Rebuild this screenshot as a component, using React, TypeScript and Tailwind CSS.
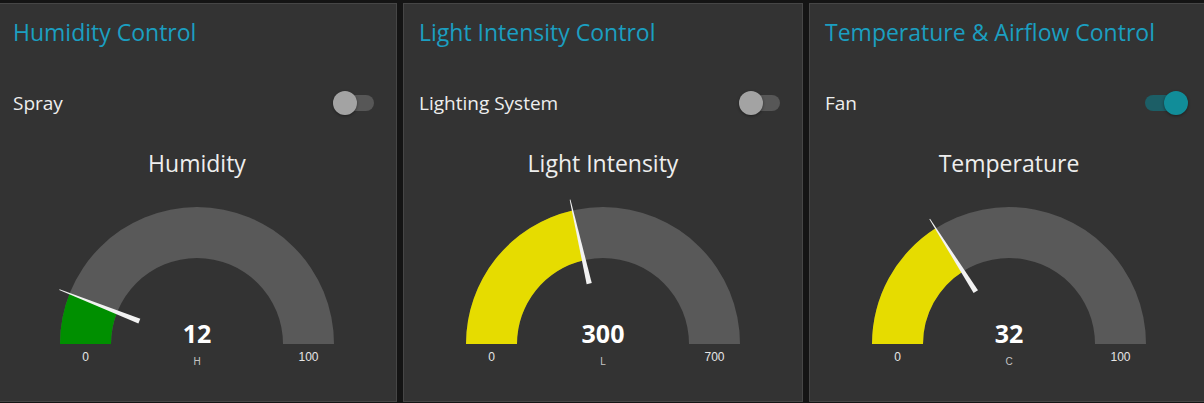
import React from 'react'

type GaugeProps = {
    value: number
    min: number
    max: number
    unit: string
    color: string
}

function Gauge({ value, min, max, unit, color }: GaugeProps) {
    const cx = 150
    const cy = 150
    const R = 137
    const r = 86
    const t = (value - min) / (max - min)
    const a = Math.PI * (1 - t)
    const pt = (rad: number, ang: number) => [cx + rad * Math.cos(ang), cy - rad * Math.sin(ang)]
    const sector = (ang: number) => {
        const [x1, y1] = pt(R, ang)
        const [x2, y2] = pt(r, ang)
        return `M ${cx - R} ${cy} A ${R} ${R} 0 0 1 ${x1} ${y1} L ${x2} ${y2} A ${r} ${r} 0 0 0 ${cx - r} ${cy} Z`
    }
    // needle: wide base inside the arc, thin tip just past the outer edge
    const [bx, by] = pt(62, a)
    const [tx, ty] = pt(148, a)
    const nx = Math.sin(a)
    const ny = Math.cos(a)
    const needle = [
        [bx + 2.6 * nx, by + 2.6 * ny],
        [tx + 0.4 * nx, ty + 0.4 * ny],
        [tx - 0.4 * nx, ty - 0.4 * ny],
        [bx - 2.6 * nx, by - 2.6 * ny],
    ]
        .map(([x, y]) => `${x},${y}`)
        .join(' ')

    return (
        <svg width="300" height="180" viewBox="0 0 300 180">
            <path d={sector(0)} fill="#595959" />
            <path d={sector(a)} fill={color} />
            <polygon points={needle} fill="#f2f2f2" />
            <text
                x={cx}
                y={149}
                textAnchor="middle"
                fill="#ffffff"
                fontSize="25"
                fontWeight="700"
                fontFamily="'Open Sans', sans-serif"
            >
                {value}
            </text>
            <text x={cx - (R + r) / 2} y={167} textAnchor="middle" fill="#e6e6e6" fontSize="12" fontFamily="'Liberation Sans', Arial, sans-serif">
                {min}
            </text>
            <text x={cx + (R + r) / 2} y={167} textAnchor="middle" fill="#e6e6e6" fontSize="12" fontFamily="'Liberation Sans', Arial, sans-serif">
                {max}
            </text>
            <text x={cx} y={171} textAnchor="middle" fill="#c4c4c4" fontSize="10" fontFamily="'Liberation Sans', Arial, sans-serif">
                {unit}
            </text>
        </svg>
    )
}

function Toggle({ on }: { on: boolean }) {
    return (
        <div className="relative h-[24px] w-[43px]">
            <div className={`absolute left-0 right-[2px] top-[4px] h-[16px] rounded-full ${on ? 'bg-[#1c5e66]' : 'bg-[#575757]'}`} />
            <div
                className={`absolute top-0 h-[24px] w-[24px] rounded-full shadow-[0_1px_3px_rgba(0,0,0,0.4)] ${
                    on ? 'left-[19px] bg-[#118d99]' : 'left-0 bg-[#a3a3a3]'
                }`}
            />
        </div>
    )
}

type PanelProps = {
    title: string
    label: string
    on: boolean
    gaugeTitle: string
    gauge: GaugeProps
}

function Panel({ title, label, on, gaugeTitle, gauge }: PanelProps) {
    return (
        <div className="flex h-[399px] w-[400px] shrink-0 flex-col border border-[#464646] bg-[#333333] pt-[13px]">
            <p className="h-[30px] pl-[15px] text-[23px] leading-[30px] text-[#1b9fc1]">{title}</p>
            <div className="mt-[36px] flex h-[40px] items-center justify-between pl-[15px] pr-[20px]">
                <p className="text-[19px] text-[#eeeeee]">{label}</p>
                <Toggle on={on} />
            </div>
            <p className="mt-[25px] h-[30px] text-center text-[23px] leading-[30px] text-[#eeeeee]">{gaugeTitle}</p>
            <div className="mt-[16px] flex justify-center">
                <Gauge {...gauge} />
            </div>
        </div>
    )
}

export default function App() {
    return (
        <div className="h-[403px] w-[1204px] overflow-hidden bg-[#141414] font-['Open_Sans',sans-serif]">
            <div className="-ml-[3px] flex gap-[6px] pt-[3px]">
                <Panel
                    title="Humidity Control"
                    label="Spray"
                    on={false}
                    gaugeTitle="Humidity"
                    gauge={{ value: 12, min: 0, max: 100, unit: 'H', color: '#008f00' }}
                />
                <Panel
                    title="Light Intensity Control"
                    label="Lighting System"
                    on={false}
                    gaugeTitle="Light Intensity"
                    gauge={{ value: 300, min: 0, max: 700, unit: 'L', color: '#e6dc00' }}
                />
                <Panel
                    title="Temperature & Airflow Control"
                    label="Fan"
                    on={true}
                    gaugeTitle="Temperature"
                    gauge={{ value: 32, min: 0, max: 100, unit: 'C', color: '#e6dc00' }}
                />
            </div>
        </div>
    )
}
